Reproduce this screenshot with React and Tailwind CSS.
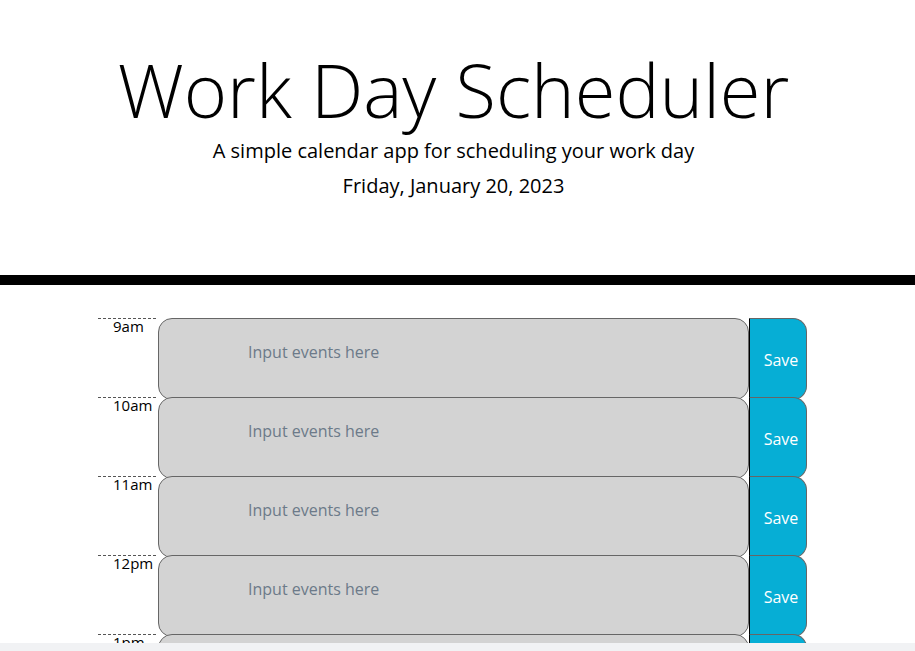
import React from 'react';

const HOURS = ['9am', '10am', '11am', '12pm', '1pm', '2pm', '3pm', '4pm', '5pm'];

function TimeBlock({ hour }) {
  return (
    <div className="flex h-[79px]">
      <div className="w-[58px] shrink-0 border-t border-dashed border-[#555] pl-[15px] text-[15px] leading-[15px] text-black">
        {hour}
      </div>
      <textarea
        className="ml-[2px] h-[82px] w-[591px] shrink-0 resize-none rounded-[14px] border border-[#666] bg-[#d3d3d3] pl-[89px] pt-[21px] text-[16px] leading-[24px] text-black outline-none placeholder:text-[#6c7a89]"
        placeholder="Input events here"
      />
      <button className="h-[82px] w-[58px] shrink-0 rounded-r-[14px] border border-l-black border-[#666] bg-[#06aed5] pl-[6px] pt-[2px] text-[16px] text-white">
        Save
      </button>
    </div>
  );
}

export default function App() {
  return (
    <div className="min-h-screen bg-white" style={{ fontFamily: '"Open Sans", sans-serif' }}>
      <header className="border-b-[10px] border-black pb-[74px] pr-[8px] pt-[46px] text-center">
        <h1 className="text-[74px] font-light leading-[1.2] text-black">Work Day Scheduler</h1>
        <p className="mt-[1px] text-[20px] leading-[30px] text-black">A simple calendar app for scheduling your work day</p>
        <p className="mt-[5px] text-[20px] leading-[30px] text-black">Friday, January 20, 2023</p>
      </header>
      <div className="mx-auto w-[720px] pl-[0.5px] pt-[33px] pb-[40px]">
        {HOURS.map((h) => (
          <TimeBlock key={h} hour={h} />
        ))}
      </div>
      <div className="fixed bottom-0 left-0 h-[8px] w-full bg-[#f1f2f4]" />
    </div>
  );
}
